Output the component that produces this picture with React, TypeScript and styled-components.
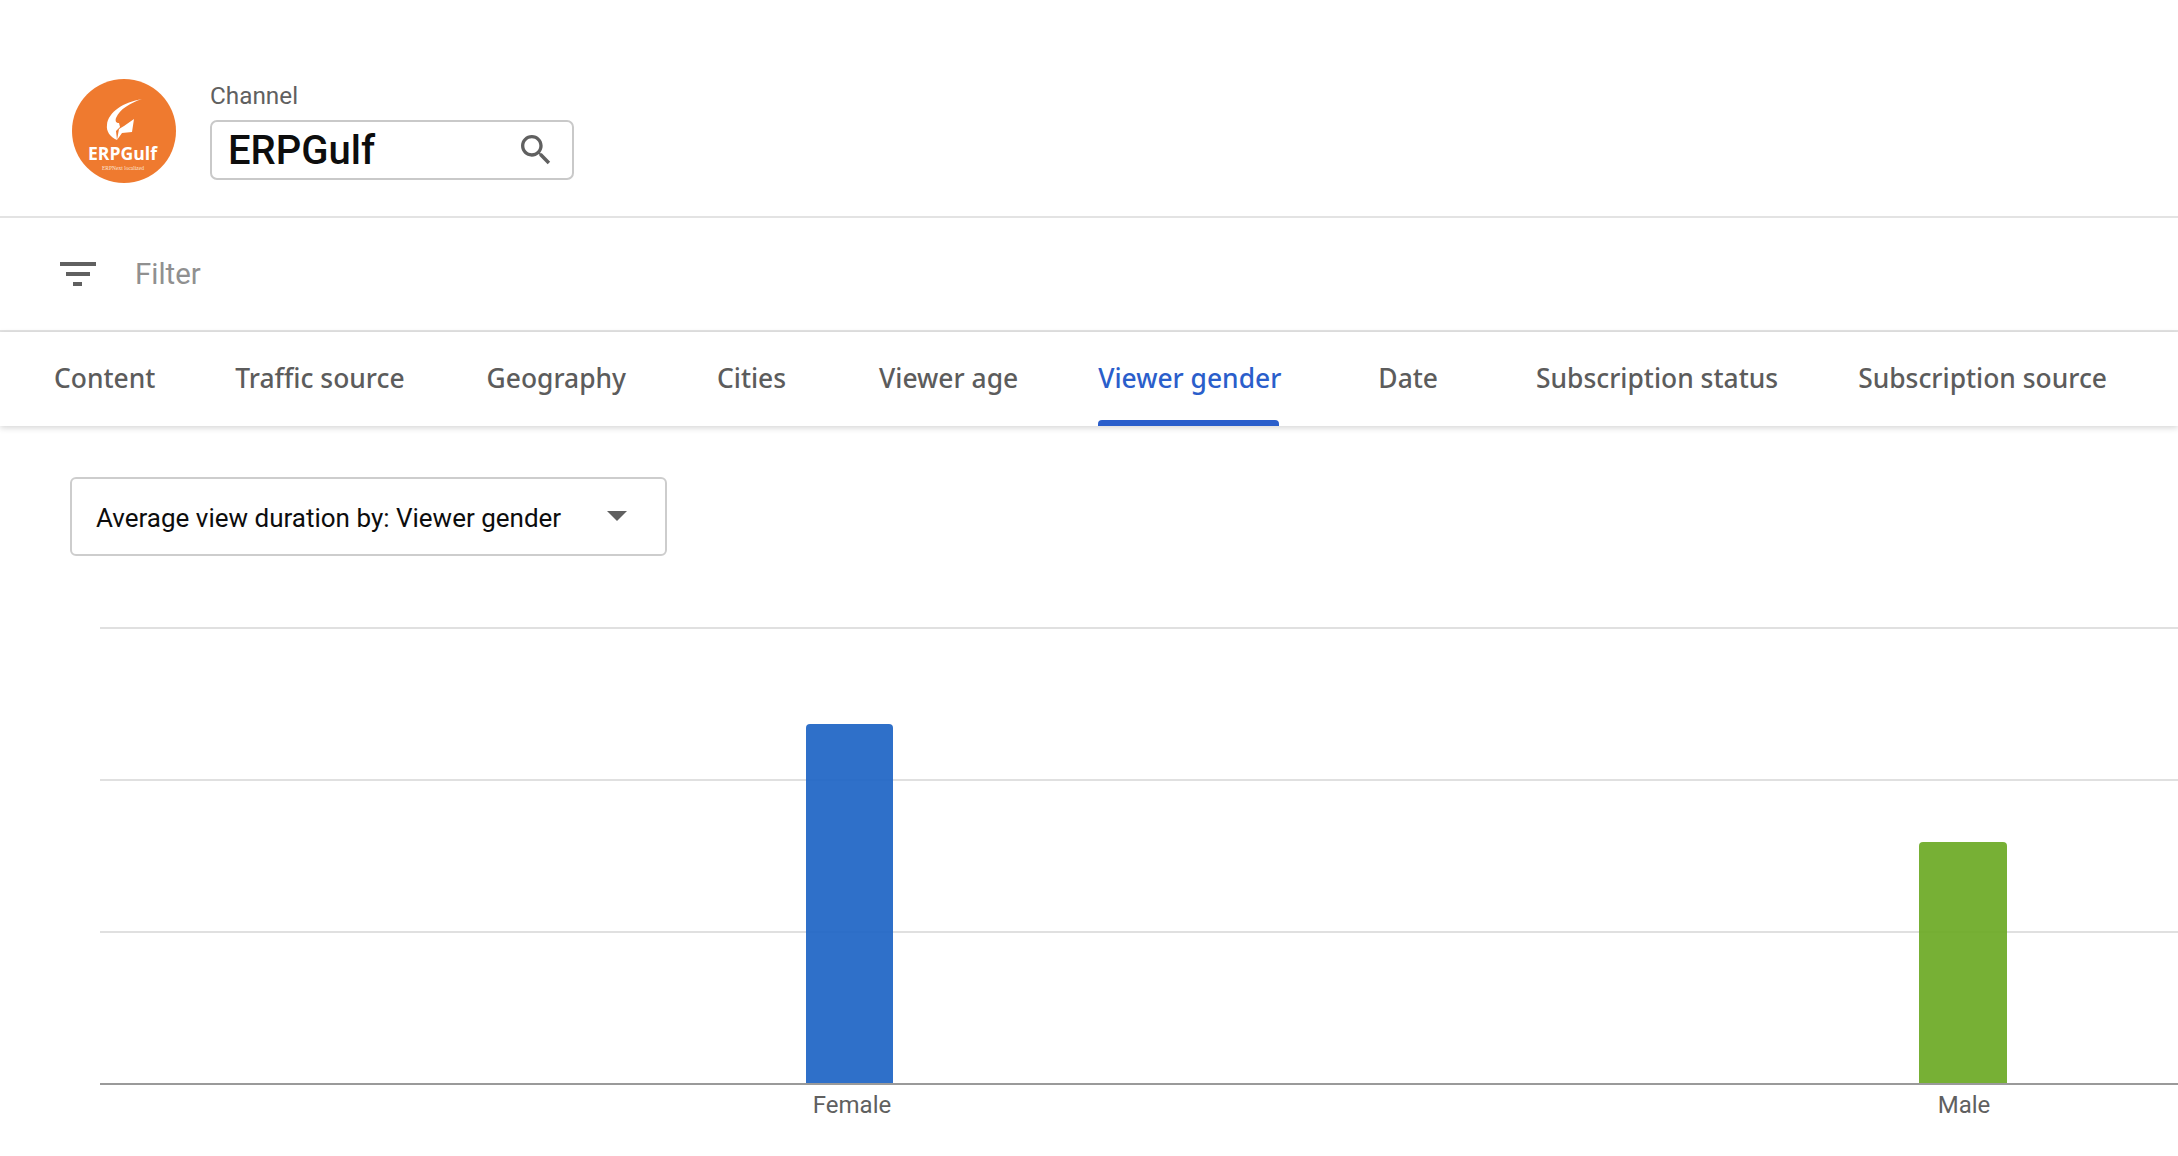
import React from "react";
import styled, { createGlobalStyle } from "styled-components";

const Global = createGlobalStyle`
  html, body { margin: 0; padding: 0; background: #fff; }
  body { font-family: Roboto, "Liberation Sans", sans-serif; overflow: hidden; }
`;

const Page = styled.div`
  width: 2178px;
  height: 1156px;
  overflow: hidden;
  background: #fff;
`;

const Header = styled.header`
  height: 218px;
  box-sizing: border-box;
  padding: 79px 0 0 72px;
  display: flex;
  gap: 34px;
  border-bottom: 2px solid #e3e3e3;
`;

const Logo = styled.svg`
  width: 104px;
  height: 104px;
  flex: none;
`;

const ChannelColumn = styled.div`
  display: flex;
  flex-direction: column;
  margin-top: 2px;
`;

const ChannelLabel = styled.div`
  font-size: 24.3px;
  line-height: 30px;
  height: 39px;
  color: #606060;
`;

const SearchBox = styled.div`
  width: 364px;
  height: 60px;
  box-sizing: border-box;
  border: 2px solid #c9c9c9;
  border-radius: 7px;
  display: flex;
  align-items: center;
  justify-content: space-between;
  padding: 0 16px;
`;

const ChannelName = styled.span`
  font-size: 40px;
  font-weight: 500;
  color: #0d0d0d;
`;

const SearchIcon = styled.svg`
  width: 40px;
  height: 40px;
  fill: #606060;
  flex: none;
`;

const FilterBar = styled.div`
  height: 114px;
  box-sizing: border-box;
  padding: 0 0 0 60px;
  display: flex;
  align-items: center;
  gap: 39px;
  border-bottom: 2px solid #e3e3e3;
`;

const FilterIcon = styled.svg`
  width: 36px;
  height: 24px;
  fill: #606060;
  flex: none;
`;

const FilterText = styled.span`
  font-family: Roboto, sans-serif;
  font-size: 29.4px;
  color: #909090;
`;

const Tabs = styled.nav`
  height: 94px;
  box-sizing: border-box;
  padding-left: 54px;
  display: flex;
  align-items: stretch;
  box-shadow: 0 2px 6px rgba(0, 0, 0, 0.16);
  position: relative;
`;

const Tab = styled.div<{ $gap: number; $active?: boolean }>`
  position: relative;
  margin-right: ${(p) => p.$gap}px;
  font-family: "Noto Sans", sans-serif;
  font-size: 26.4px;
  font-weight: 500;
  line-height: 92px;
  white-space: nowrap;
  color: ${(p) => (p.$active ? "#2a5ecb" : "#5c5c5c")};

  ${(p) =>
    p.$active &&
    `&::after {
      content: "";
      position: absolute;
      left: 0;
      right: 2px;
      bottom: 0;
      height: 6px;
      background: #2a5ecb;
      border-radius: 4px 4px 0 0;
    }`}
`;

const Main = styled.main`
  padding: 51px 0 0 70px;
`;

const Dropdown = styled.div`
  width: 597px;
  height: 79px;
  box-sizing: border-box;
  border: 2px solid #cdcdcd;
  border-radius: 6px;
  padding: 0 0 0 24px;
  display: flex;
  align-items: center;
  gap: 46px;
`;

const DropdownText = styled.span`
  font-size: 26px;
  color: #0d0d0d;
  white-space: nowrap;
  margin-top: 2px;
`;

const Caret = styled.svg`
  width: 20px;
  height: 10px;
  fill: #606060;
  flex: none;
  margin-top: -1px;
`;

const Chart = styled.svg`
  display: block;
  margin: 71px 0 0 30px;
  width: 2078px;
  height: 529px;
`;

const AxisLabel = styled.text`
  font-family: Roboto, sans-serif;
  font-size: 24px;
  fill: #606060;
  text-anchor: middle;
`;

const tabs: { label: string; gap: number; active?: boolean }[] = [
  { label: "Content", gap: 80 },
  { label: "Traffic source", gap: 82 },
  { label: "Geography", gap: 91 },
  { label: "Cities", gap: 93 },
  { label: "Viewer age", gap: 80 },
  { label: "Viewer gender", gap: 97 },
  { label: "Date", gap: 98 },
  { label: "Subscription status", gap: 80 },
  { label: "Subscription source", gap: 0 },
].map((t) => ({ ...t, active: t.label === "Viewer gender" }));

// Chart coordinates are page coordinates minus (100, 627).
const grid = [0, 152, 304];
const baseline = 457;

export default function App() {
  return (
    <Page>
      <Global />
      <Header>
        <Logo viewBox="0 0 104 104">
          <circle cx="52" cy="52" r="52" fill="#ef7a2f" />
          <path
            fill="#fff"
            d="M70 20 C52 23 36 33 35 46 C34 52 38 58 45 61 L44 52 L48 48 L47 44 C44 44 43 42 44 39 C48 30 58 24 70 20 Z"
          />
          <path fill="#fff" d="M45 61 L47 50 L52 47 L62 40 L60 53 L50 54 Z" />
          <text x="50.5" y="80.5" textAnchor="middle" fontFamily="'Open Sans', sans-serif" fontWeight="700" fontSize="17.6" fill="#fff">
            ERPGulf
          </text>
          <text x="51" y="91" textAnchor="middle" fontFamily="'Liberation Serif', serif" fontSize="5.5" fill="#fde6d6">
            ERPNext localized
          </text>
        </Logo>
        <ChannelColumn>
          <ChannelLabel>Channel</ChannelLabel>
          <SearchBox>
            <ChannelName>ERPGulf</ChannelName>
            <SearchIcon viewBox="0 0 24 24">
              <path d="M15.5 14h-.79l-.28-.27C15.41 12.59 16 11.11 16 9.5 16 5.91 13.09 3 9.5 3S3 5.91 3 9.5 5.91 16 9.5 16c1.61 0 3.09-.59 4.23-1.57l.27.28v.79l5 4.99L20.49 19l-4.99-5zm-6 0C7.01 14 5 11.99 5 9.5S7.01 5 9.5 5 14 7.01 14 9.5 11.99 14 9.5 14z" />
            </SearchIcon>
          </SearchBox>
        </ChannelColumn>
      </Header>
      <FilterBar>
        <FilterIcon viewBox="0 0 36 24">
          <rect x="0" y="0" width="36" height="4" />
          <rect x="6" y="10" width="24" height="4" />
          <rect x="13" y="20" width="9" height="4" />
        </FilterIcon>
        <FilterText>Filter</FilterText>
      </FilterBar>
      <Tabs>
        {tabs.map((t) => (
          <Tab key={t.label} $gap={t.gap} $active={t.active}>
            {t.label}
          </Tab>
        ))}
      </Tabs>
      <Main>
        <Dropdown>
          <DropdownText>Average view duration by: Viewer gender</DropdownText>
          <Caret viewBox="0 0 20 10">
            <path d="M0 0 H20 L10 10 Z" />
          </Caret>
        </Dropdown>
        <Chart viewBox="0 0 2078 529">
          {grid.map((y) => (
            <rect key={y} x="0" y={y} width="2078" height="2" fill="#e0e0e0" />
          ))}
          <path d="M706 457 V101 a4 4 0 0 1 4 -4 H789 a4 4 0 0 1 4 4 V457 Z" fill="#1a62c4" fillOpacity="0.91" />
          <path d="M1819 457 V219 a4 4 0 0 1 4 -4 H1903 a4 4 0 0 1 4 4 V457 Z" fill="#6aa821" fillOpacity="0.91" />
          <rect x="0" y={baseline - 1} width="2078" height="2" fill="#9a9a9a" />
          <AxisLabel x="752" y="486">Female</AxisLabel>
          <AxisLabel x="1864" y="486">Male</AxisLabel>
        </Chart>
      </Main>
    </Page>
  );
}
